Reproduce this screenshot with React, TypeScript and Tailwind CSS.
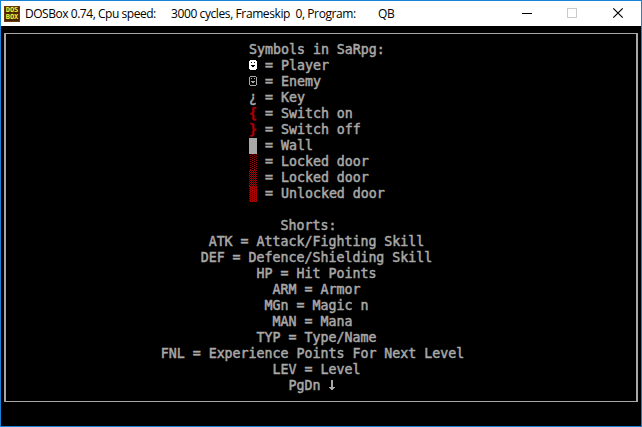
import type { ReactNode } from "react";

const FACE_SOLID = [0x7e, 0xff, 0xdb, 0xff, 0xff, 0xc3, 0xe7, 0xff, 0xff, 0x7e];
const FACE_OUTLINE = [0x7e, 0x81, 0xa5, 0x81, 0x81, 0xbd, 0x99, 0x81, 0x81, 0x7e];
const ARROW_DOWN = [0x18, 0x18, 0x18, 0x18, 0x18, 0x18, 0x18, 0x7e, 0x3c, 0x18];
const shade = (a: number, b: number) => Array.from({ length: 16 }, (_, i) => (i % 2 ? b : a));

// An 8x16 character cell painted from one byte per row.
function Cell({ rows, top = 2 }: { rows: number[]; top?: number }) {
  return (
    <svg className="block h-4 w-2 shrink-0" viewBox="0 0 8 16" shapeRendering="crispEdges" fill="currentColor">
      {rows.map((bits, y) =>
        [0, 1, 2, 3, 4, 5, 6, 7].map((x) =>
          bits & (0x80 >> x) ? <rect key={`${x}-${y}`} x={x} y={y + top} width="1" height="1" /> : null,
        ),
      )}
    </svg>
  );
}

const legend: { icon: ReactNode; color: string; label: string }[] = [
  { icon: <Cell rows={FACE_SOLID} />, color: "text-white", label: "Player" },
  { icon: <Cell rows={FACE_OUTLINE} />, color: "text-[#a8a8a8]", label: "Enemy" },
  { icon: "¿", color: "text-[#a8a8a8]", label: "Key" },
  { icon: "{", color: "font-bold text-[#a80000]", label: "Switch on" },
  { icon: "}", color: "font-bold text-[#a80000]", label: "Switch off" },
  { icon: <Cell rows={shade(0xff, 0xff)} top={0} />, color: "text-[#a8a8a8]", label: "Wall" },
  { icon: <Cell rows={shade(0x11, 0x44)} top={0} />, color: "text-[#a80000]", label: "Locked door" },
  { icon: <Cell rows={shade(0x55, 0xaa)} top={0} />, color: "text-[#a80000]", label: "Locked door" },
  { icon: <Cell rows={shade(0xdd, 0x77)} top={0} />, color: "text-[#a80000]", label: "Unlocked door" },
];

const shorts: [number, string][] = [
  [35, "Shorts:"],
  [26, "ATK = Attack/Fighting Skill"],
  [25, "DEF = Defence/Shielding Skill"],
  [32, "HP = Hit Points"],
  [34, "ARM = Armor"],
  [33, "MGn = Magic n"],
  [34, "MAN = Mana"],
  [32, "TYP = Type/Name"],
  [20, "FNL = Experience Points For Next Level"],
  [34, "LEV = Level"],
];

function TitleBar() {
  return (
    <header className="flex h-[25px] shrink-0 items-center bg-white pl-[3px] font-['Open_Sans','Noto_Sans',sans-serif] text-[12px] text-black">
      <div className="flex h-4 w-4 shrink-0 flex-col items-center justify-center overflow-hidden border border-[#6b3a0c] bg-[#4a2604] font-['DejaVu_Sans_Mono',monospace] text-[7px] leading-[7px] font-bold text-[#ffee30]">
        <span>DOS</span>
        <span>BOX</span>
      </div>
      <div className="ml-[5px] flex flex-1 leading-4 whitespace-pre">
        <span className="w-[146px] tracking-[-0.46px]">DOSBox 0.74, Cpu speed:</span>
        <span className="w-[207px] tracking-[-0.4px]">3000 cycles, Frameskip  0, Program:</span>
        <span className="tracking-[-0.4px]">QB</span>
      </div>
      <svg className="h-[25px] w-[138px] shrink-0" viewBox="0 0 138 25" fill="none" stroke="#000">
        <path d="M19 12.5h10" shapeRendering="crispEdges" />
        <path d="M64.5 7.5h9v9h-9z" stroke="#ccc" shapeRendering="crispEdges" />
        <path d="M110.3 7.3l9.4 9.4M119.7 7.3l-9.4 9.4" strokeWidth="1.2" />
      </svg>
    </header>
  );
}

export default function App() {
  return (
    <div className="flex h-[427px] w-[642px] flex-col overflow-hidden border border-[#1883d7] bg-black">
      <TitleBar />
      <main className="flex-1 px-[3px] pt-[7px]">
        <div className="h-[369px] border-x-2 border-y border-[#a8a8a8] pt-2 font-['DejaVu_Sans_Mono','Liberation_Mono',monospace] text-[13.288px] leading-4 whitespace-pre text-[#a8a8a8] [-webkit-text-stroke:0.5px]">
          <div className="pl-[243px]">
            <div className="h-4">Symbols in SaRpg:</div>
            {legend.map((row, i) => (
              <div key={i} className="flex h-4">
                <span className={`w-2 ${row.color}`}>{row.icon}</span>
                <span>{" = " + row.label}</span>
              </div>
            ))}
          </div>
          <div className="-ml-[5px] pt-4">
            {shorts.map(([column, text]) => (
              <div key={text} className="h-4">
                {" ".repeat(column) + text}
              </div>
            ))}
            <div className="flex h-4">
              <span>{" ".repeat(36) + "PgDn "}</span>
              <Cell rows={ARROW_DOWN} />
            </div>
          </div>
        </div>
      </main>
    </div>
  );
}
